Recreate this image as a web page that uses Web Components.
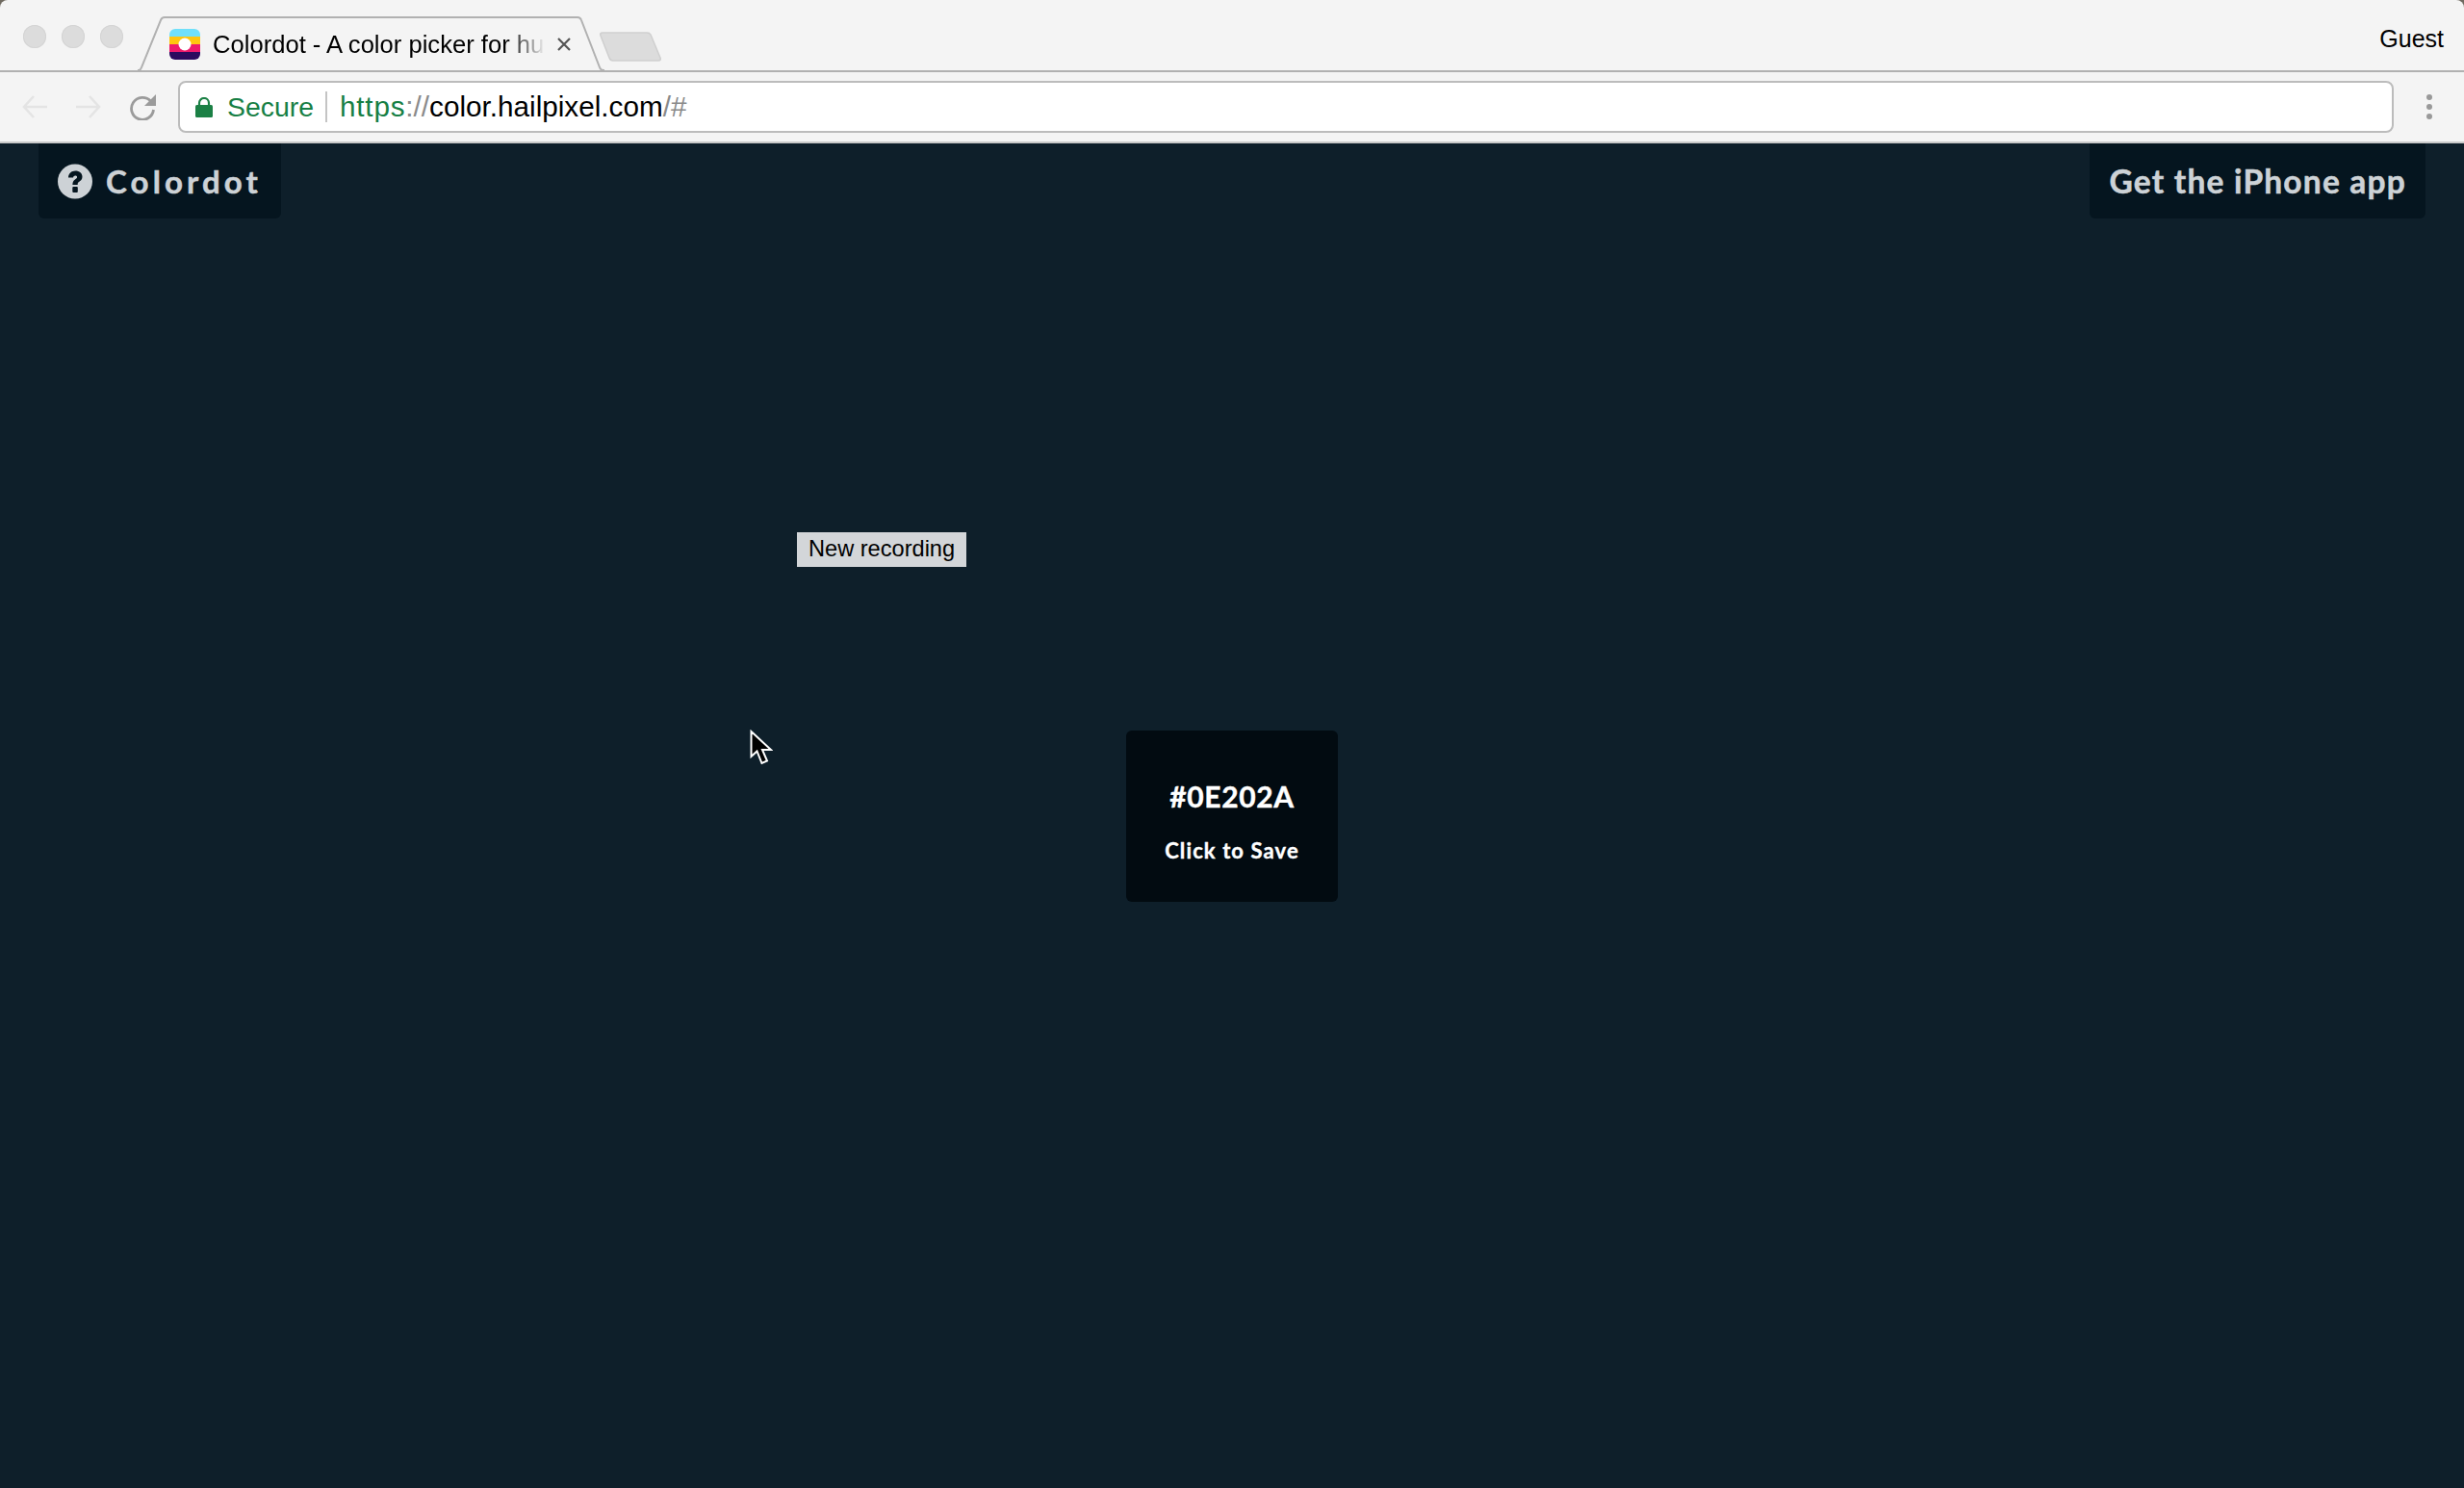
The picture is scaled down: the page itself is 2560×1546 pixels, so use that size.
<!DOCTYPE html>
<html lang="en"><head><meta charset="utf-8"><title>Colordot</title>
<style>
html,body{margin:0;height:100%;background:#6f6a60;overflow:hidden}
body{display:flex;flex-direction:column;height:1546px}
</style></head><body>
<browser-window>
  <color-page>
    <top-button slot="left" icon>Colordot</top-button>
    <top-button slot="right">Get the iPhone app</top-button>
    <swatch-card hex="#0E202A" note="Click to Save"></swatch-card>
    <rec-tip>New recording</rec-tip>
    <mouse-cursor></mouse-cursor>
  </color-page>
</browser-window>
<script>
function def(name, html){
  customElements.define(name, class extends HTMLElement{
    connectedCallback(){
      if(this.shadowRoot) return;
      const r=this.attachShadow({mode:'open'});
      r.innerHTML=typeof html==='function'?html(this):html;
    }
  });
}
const UI='"Liberation Sans",Arial,sans-serif';
def('traffic-lights',`<style>
:host{display:flex;gap:16px;margin:26px 0 0 24px;flex:none}
i{width:24px;height:24px;border-radius:50%;background:#dcdcdc;box-shadow:inset 0 0 0 1px #d4d4d4}
</style><i></i><i></i><i></i>`);
def('browser-tab',`<style>
:host{display:block;position:relative;flex:none;width:485px;height:57px;margin:17px 0 -1px 15px;font:25.6px ${UI};color:#000;z-index:1}
.shape{position:absolute;left:0;top:0}
.row{position:relative;display:flex;align-items:center;height:57px;padding-left:33px;box-sizing:border-box}
.fav{flex:none;margin-top:1px}
.t{margin-left:13px;width:346px;flex:none;white-space:nowrap;overflow:hidden;-webkit-mask-image:linear-gradient(90deg,#000 305px,transparent 346px);mask-image:linear-gradient(90deg,#000 305px,transparent 346px);margin-top:1px}
.x{flex:none;margin-left:12px;margin-top:1px}
</style>
<svg class="shape" width="485" height="57" viewBox="0 0 485 57"><path d="M0 56H1Q3 56 4 53L24 4Q25 1 28 1H457Q460 1 461 4L480 53Q481 56 484 56H485" fill="#f4f4f4" stroke="#b1b1b1" stroke-width="2"/></svg>
<div class="row">
<svg class="fav" width="32" height="32" viewBox="0 0 32 32"><defs><clipPath id="c"><rect width="32" height="32" rx="6"/></clipPath></defs><g clip-path="url(#c)"><rect width="32" height="8" fill="#70e0fa"/><rect y="8" width="32" height="8" fill="#ffc60f"/><rect y="16" width="32" height="8" fill="#ee1a6b"/><rect y="24" width="32" height="8" fill="#2d0a5e"/></g><circle cx="16" cy="16" r="6.5" fill="#fff"/></svg>
<div class="t"><slot></slot></div>
<svg class="x" width="14" height="14" viewBox="0 0 14 14"><path d="M1 1L13 13M13 1L1 13" stroke="#555" stroke-width="2.2"/></svg>
</div>`);
def('new-tab',`<style>:host{display:block;flex:none;margin:33px 0 0 -5px;width:64px;height:30px}</style>
<svg width="66" height="32" viewBox="0 0 66 32"><path d="M3 1H49Q52 1 53 3L63 27Q64 30 61 30H14Q11 30 10 27L1 4Q0 1 3 1Z" fill="#dcdcdc" stroke="#cfcfcf" stroke-width="1.5"/></svg>`);
def('tab-strip',`<style>
:host{display:flex;flex:none;height:73px;background:#f4f4f4;border-bottom:2px solid #b1b1b1;box-sizing:content-box;font:25px ${UI}}
.g{margin:26px 21px 0 auto;color:#000;font-size:25px;line-height:29px}
</style><traffic-lights></traffic-lights><browser-tab>Colordot - A color picker for hu</browser-tab><new-tab></new-tab><div class="g">Guest</div>`);
def('url-box',`<style>
:host{display:flex;align-items:center;flex:1;height:54px;box-sizing:border-box;border:2px solid #bcbcbc;border-radius:8px;background:#fff;font:29.7px ${UI};white-space:nowrap;padding-left:16px}
.s{color:#177f45;margin-left:15px;font-size:28.4px}
.d{width:2px;height:32px;background:#c4c4c4;margin:0 13px 0 12px}
.h{color:#177f45;letter-spacing:.8px}.m{color:#8a8a8a}.b{color:#000}
</style>
<svg width="18" height="21" viewBox="0 0 18 21"><path d="M4 9V6a5 5 0 0 1 10 0v3" fill="none" stroke="#1b8045" stroke-width="2.2"/><rect y="8" width="18" height="13" rx="1.5" fill="#1b8045"/></svg>
<span class="s">Secure</span><span class="d"></span><span><span class="h">https</span><span class="m">://</span><span class="b">color.hailpixel.com</span><span class="m">/#</span></span>`);
def('tool-bar',`<style>
:host{display:flex;align-items:center;flex:none;height:72px;background:#f4f4f4;border-bottom:2px solid #c9c9c9}
svg{flex:none;display:block}
.back{margin-left:23px}.fwd{margin-left:30px}.rel{margin:0 23px 0 30px}
.dots{margin:0 33px 0 34px}
</style>
<svg class="back" width="26" height="26" viewBox="0 0 26 26"><path d="M12 2L2 13L12 24M2 13H26" fill="none" stroke="#e4e4e4" stroke-width="2.6"/></svg>
<svg class="fwd" width="26" height="26" viewBox="0 0 26 26"><path d="M14 2L24 13L14 24M24 13H0" fill="none" stroke="#e4e4e4" stroke-width="2.6"/></svg>
<svg class="rel" width="27" height="27" viewBox="0 0 27 27"><path d="M21.5 7A11.5 11.5 0 1 0 24.5 16" fill="none" stroke="#9b9b9b" stroke-width="2.8"/><path d="M27 0V12H15Z" fill="#9b9b9b"/></svg>
<url-box></url-box>
<svg class="dots" width="6" height="26" viewBox="0 0 6 26"><circle cx="3" cy="3" r="3" fill="#999"/><circle cx="3" cy="13" r="3" fill="#999"/><circle cx="3" cy="23" r="3" fill="#999"/></svg>`);
def('browser-window',`<style>
:host{display:flex;flex-direction:column;height:1546px;border-radius:8px 8px 0 0;overflow:hidden}
</style><tab-strip></tab-strip><tool-bar></tool-bar><slot></slot>`);
def('color-page',`<style>
:host{display:grid;position:relative;flex:1;background:#0e1f2a;place-items:center;grid-template-rows:1fr}
.top{position:absolute;inset:0 40px auto 40px;display:flex;justify-content:space-between}
</style><div class="top"><slot name="left"></slot><slot name="right"></slot></div><slot></slot>`);
def('top-button',el=>{
  const icon=el.hasAttribute('icon');
  return `<style>
:host{display:flex;align-items:center;height:78px;box-sizing:border-box;background:#05151f;border-radius:0 0 6px 6px;color:#cdd2d6;font:700 ${icon?33:33.5}px Lato,sans-serif;letter-spacing:${icon?4.1:1.2}px;-webkit-text-stroke:.5px #cdd2d6;padding:0 ${icon?20:20}px 0 20px;white-space:nowrap}
svg{margin-right:14px;flex:none}
</style>${icon?`<svg width="36" height="37" viewBox="0 0 36 37"><circle cx="18" cy="18.5" r="18" fill="#cdd2d6"/><path d="M11 14.5C11 10.3 14.3 7.5 18.3 7.5C22.5 7.5 25.5 10 25.5 13.7C25.5 16.4 23.8 17.8 22 19C20.9 19.8 20.7 20.2 20.7 22H15.4C15.4 19.1 16.1 17.7 18 16.4C19.3 15.5 20.1 15 20.1 14C20.1 13 19.4 12.5 18.2 12.5C17 12.5 16.2 13.3 16 14.5Z" fill="#05151f"/><rect x="15.3" y="24" width="5.5" height="6" rx="1" fill="#05151f"/></svg>`:''}<slot></slot>`;
});
def('swatch-card',el=>`<style>
:host{display:flex;flex-direction:column;align-items:center;width:220px;height:178px;box-sizing:border-box;background:#020b11;border-radius:6px;color:#fff;font-family:Lato,sans-serif;font-weight:700;-webkit-text-stroke:.4px #fff;padding-top:50px}
.h{font-size:30px;line-height:37px;letter-spacing:.6px}
.n{font-size:22px;line-height:26px;margin-top:25px;letter-spacing:1.1px}
</style><div class="h">${el.getAttribute('hex')}</div><div class="n">${el.getAttribute('note')}</div>`);
def('rec-tip',`<style>
:host{display:flex;align-items:center;position:absolute;left:828px;top:404px;width:176px;height:36px;box-sizing:border-box;padding:0 0 2px 12px;background:#d3d6d9;color:#000;font:23.6px ${UI};white-space:nowrap}
</style><slot></slot>`);
def('mouse-cursor',`<style>:host{display:block;position:absolute;left:779px;top:609px;width:24px;height:38px}</style>
<svg width="24" height="38" viewBox="0 0 24 38"><path d="M1.5 2V28L7.5 22.5L12.5 35L18 32.5L13 21H22Z" fill="#000" stroke="#fff" stroke-width="2"/></svg>`);
</script>
</body></html>
